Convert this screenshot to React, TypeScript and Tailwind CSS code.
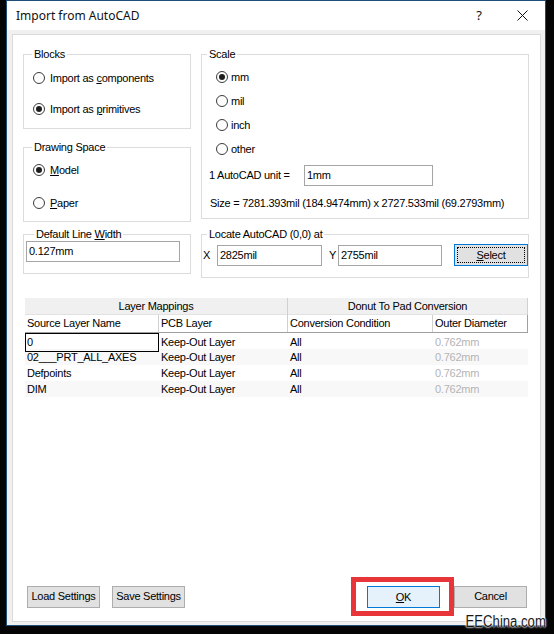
import React from 'react'

function Radio({ checked, label, gap = 'ml-[5px]' }: { checked?: boolean; label: React.ReactNode; gap?: string }) {
  return (
    <div className="flex h-[16px] items-center">
      <span className="flex h-[12px] w-[12px] shrink-0 items-center justify-center rounded-full border border-[#3c3c3c] bg-[#fdfdfd]">
        {checked && <span className="h-[6px] w-[6px] rounded-full bg-[#1e1e1e]" />}
      </span>
      <span className={gap}>{label}</span>
    </div>
  )
}

function Box({ title, className, legend = 'ml-[8px]', children }: { title: React.ReactNode; className: string; legend?: string; children: React.ReactNode }) {
  return (
    <fieldset className={`border border-[#dcdcdc] ${className}`}>
      <legend className={`px-[2px] leading-[13px] ${legend}`}>{title}</legend>
      {children}
    </fieldset>
  )
}

function Field({ value, className }: { value: string; className: string }) {
  return (
    <div className={`flex h-[21px] items-center border border-[#a5a5a5] bg-white pl-[2px] ${className}`}>{value}</div>
  )
}

function Btn({ children, className = '' }: { children: React.ReactNode; className?: string }) {
  return (
    <div className={`flex h-[22px] w-[73px] items-center justify-center border border-[#adadad] bg-[#e1e1e1] ${className}`}>
      {children}
    </div>
  )
}

const rows = ['0', '02___PRT_ALL_AXES', 'Defpoints', 'DIM']

export default function App() {
  return (
    <div className="relative h-[634px] w-[554px] overflow-hidden bg-[#050505] font-['Liberation_Sans',Arial,sans-serif] text-[11px] tracking-[-0.25px] text-black">
      <div className="ml-[6px] flex h-[626px] w-[540px] flex-col border border-[#1f4e7a]">
        {/* title bar */}
        <div className="flex h-[29px] shrink-0 items-center bg-white pl-[9px] font-['Noto_Sans',sans-serif] text-[12px] tracking-normal text-[#111]">
          <span>Import from AutoCAD</span>
          <span className="ml-auto mr-[35px] text-[13px]">?</span>
          <svg width="11" height="11" viewBox="0 0 11 11" className="mr-[17px]">
            <path d="M0.5 0.5 L10.5 10.5 M10.5 0.5 L0.5 10.5" stroke="#111" strokeWidth="1" />
          </svg>
        </div>

        {/* body */}
        <div className="flex flex-1 flex-col bg-[#f0f0f0] pb-[3px] pl-[5px] pr-[4px] pt-[4px]">
          <div className="flex flex-1 flex-col border border-[#dadada] bg-white">
            {/* top groups */}
            <div className="flex pl-[10px] pt-[13px]">
              <div className="flex w-[168px] flex-col">
                <Box title="Blocks" className="h-[81px]">
                  <div className="flex flex-col gap-[15px] pl-[9px] pt-[9px]">
                    <Radio label={<>Import as <span className="underline underline-offset-1">c</span>omponents</>} />
                    <Radio checked label={<>Import as <span className="underline underline-offset-1">p</span>rimitives</>} />
                  </div>
                </Box>
                <Box title="Drawing Space" className="mt-[12px] h-[81px]">
                  <div className="flex flex-col gap-[17px] pl-[9px] pt-[8px]">
                    <Radio checked label={<><span className="underline underline-offset-1">M</span>odel</>} />
                    <Radio label={<><span className="underline underline-offset-1">P</span>aper</>} />
                  </div>
                </Box>
                <Box
                  title={<>Default Line <span className="underline underline-offset-1">W</span>idth</>}
                  legend="ml-[10px]"
                  className="mt-[6px] h-[46px]"
                >
                  <div className="pl-[2px]">
                    <Field value="0.127mm" className="w-[154px]" />
                  </div>
                </Box>
              </div>

              <div className="ml-[10px] flex w-[328px] flex-col">
                <Box title="Scale" legend="ml-[5px]" className="h-[171px]">
                  <div className="flex flex-col gap-[8px] pl-[14px] pt-[8px]">
                    <Radio checked gap="ml-[3px]" label="mm" />
                    <Radio gap="ml-[3px]" label="mil" />
                    <Radio gap="ml-[3px]" label="inch" />
                    <Radio gap="ml-[3px]" label="other" />
                  </div>
                  <div className="mt-[8px] flex items-center pl-[7px]">
                    <span className="w-[95px]">1 AutoCAD unit =</span>
                    <Field value="1mm" className="w-[129px]" />
                  </div>
                  <div className="mt-[11px] pl-[8px] leading-[13px]">
                    Size = 7281.393mil (184.9474mm) x 2727.533mil (69.2793mm)
                  </div>
                </Box>
                <Box title="Locate AutoCAD (0,0) at" legend="ml-[5px]" className="mt-[9px] h-[50px]">
                  <div className="flex items-center pl-[1px] pt-[3px]">
                    <span className="w-[14px]">X</span>
                    <Field value="2825mil" className="w-[105px]" />
                    <span className="ml-[7px] w-[9px]">Y</span>
                    <Field value="2755mil" className="w-[104px]" />
                    <div className="ml-[12px] flex h-[22px] w-[74px] border border-[#0078d7] bg-[#e1e1e1] p-[2px]">
                      <span className="flex flex-1 items-center justify-center border border-dotted border-black">
                        <span className="underline underline-offset-1">S</span>elect
                      </span>
                    </div>
                  </div>
                </Box>
              </div>
            </div>

            {/* mappings table */}
            <div className="ml-[12px] mt-[20px] w-[503px]">
              <div className="grid h-[17px] grid-cols-[263px_240px] border-b border-[#e2e2e2] bg-[#f0f0f0]">
                <div className="flex items-center justify-center border-r border-[#d0d0d0]">Layer Mappings</div>
                <div className="flex items-center justify-center border-r border-[#d0d0d0]">Donut To Pad Conversion</div>
              </div>
              <div className="grid h-[18px] grid-cols-[134px_129px_145px_95px] border-b border-[#a0a0a0] bg-white">
                <div className="flex items-center border-r border-[#d0d0d0] pl-[2px]">Source Layer Name</div>
                <div className="flex items-center border-r border-[#d0d0d0] pl-[2px]">PCB Layer</div>
                <div className="flex items-center border-r border-[#d0d0d0] pl-[2px]">Conversion Condition</div>
                <div className="flex items-center border-r border-[#a0a0a0] pl-[2px]">Outer Diameter</div>
              </div>
              {rows.map((name, i) => (
                <div
                  key={name}
                  className={`grid h-[16px] grid-cols-[134px_129px_145px_95px] ${i % 2 === 1 ? 'bg-[#f8f8f8]' : 'bg-white'}`}
                >
                  <div className={`flex items-center pl-[1px] ${i === 0 ? 'border border-black' : 'pl-[2px]'}`}>{name}</div>
                  <div className="flex items-center pl-[2px]">Keep-Out Layer</div>
                  <div className="flex items-center pl-[2px]">All</div>
                  <div className="flex items-center pl-[2px] text-[#b4b4b4]">0.762mm</div>
                </div>
              ))}
            </div>

            {/* buttons */}
            <div className="mt-auto flex items-center pb-[5px] pl-[14px] pr-[13px]">
              <Btn className="w-[73px]">Load Settings</Btn>
              <Btn className="ml-[12px]">Save Settings</Btn>
              <div className="ml-auto border-[5px] border-[#e8353a] pb-[3px] pl-[11px] pr-[9px] pt-[4px]">
                <div className="flex h-[22px] w-[73px] items-center justify-center border border-[#0078d7] bg-[#e5f1fb]">
                  <span className="underline underline-offset-1">O</span>K
                </div>
              </div>
              <Btn>Cancel</Btn>
            </div>
          </div>
        </div>
      </div>

      {/* watermark */}
      <div className="absolute bottom-[3px] right-[8px] origin-right scale-x-[0.82] font-['Liberation_Sans',Arial,sans-serif] text-[16px] leading-[18px] tracking-normal text-[#1a1a1a] [text-shadow:0_0_2px_#fff,0_0_2px_#fff,0_0_3px_#fff]">
        EEChina.com
      </div>
    </div>
  )
}
